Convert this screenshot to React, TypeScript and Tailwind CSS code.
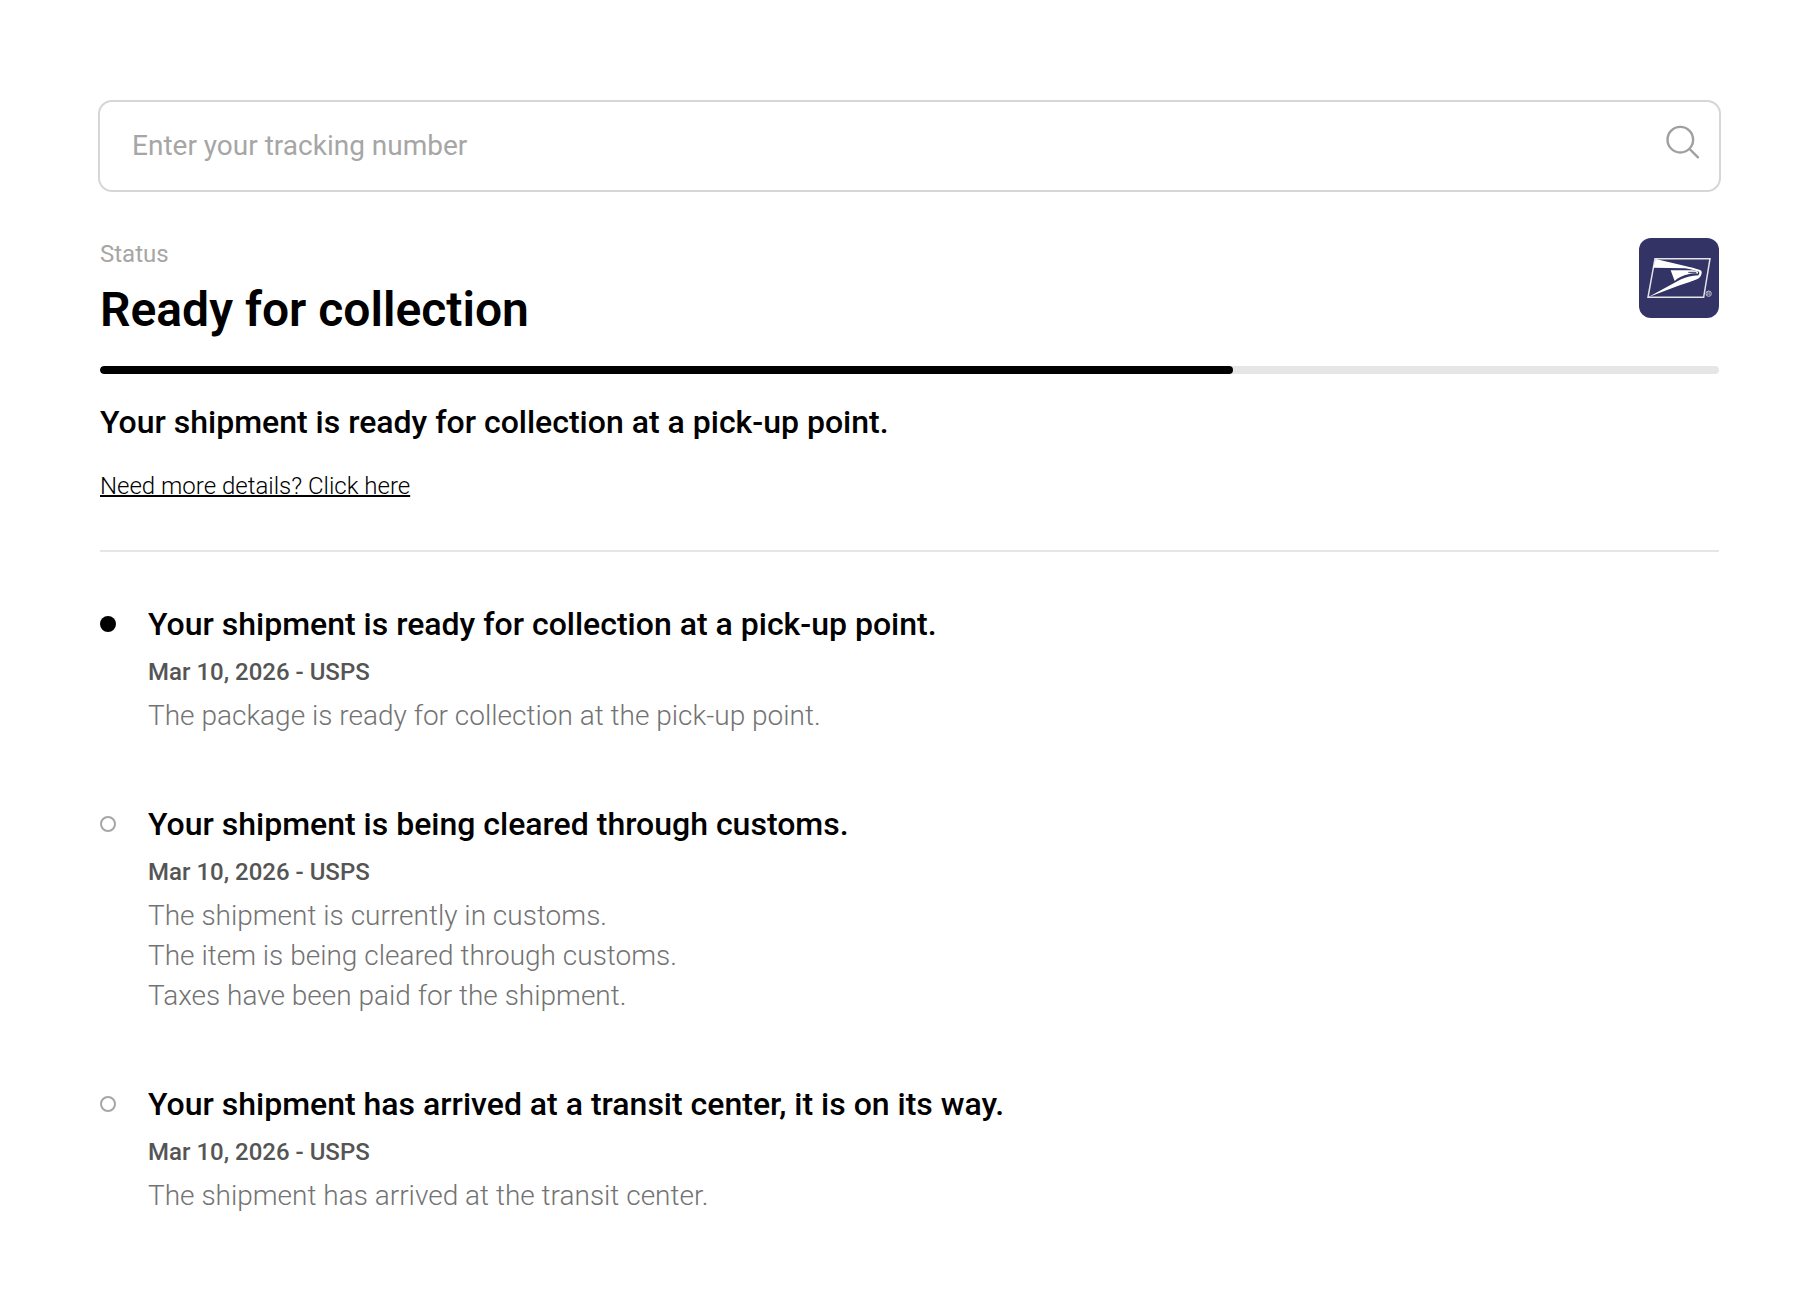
import { useState } from "react";

type TrackingEvent = {
  id: number;
  title: string;
  date: string;
  carrier: string;
  details: string[];
};

const PROGRESS = 70;

const EVENTS: TrackingEvent[] = [
  {
    id: 1,
    title: "Your shipment is ready for collection at a pick-up point.",
    date: "Mar 10, 2026",
    carrier: "USPS",
    details: ["The package is ready for collection at the pick-up point."],
  },
  {
    id: 2,
    title: "Your shipment is being cleared through customs.",
    date: "Mar 10, 2026",
    carrier: "USPS",
    details: [
      "The shipment is currently in customs.",
      "The item is being cleared through customs.",
      "Taxes have been paid for the shipment.",
    ],
  },
  {
    id: 3,
    title: "Your shipment has arrived at a transit center, it is on its way.",
    date: "Mar 10, 2026",
    carrier: "USPS",
    details: ["The shipment has arrived at the transit center."],
  },
];

const SearchIcon = () => (
  <svg
    viewBox="0 0 36 36"
    className="w-9 h-9"
    fill="none"
    stroke="currentColor"
    strokeWidth="2.4"
    strokeLinecap="round"
    aria-hidden="true"
  >
    <circle cx="15.3" cy="14.7" r="12.8" />
    <path d="M24.6 24 L33 32.3" />
  </svg>
);

const CarrierLogo = () => (
  <svg
    viewBox="0 0 240 240"
    className="w-20 h-20 rounded-xl shrink-0"
    role="img"
    aria-label="USPS"
  >
    <rect width="240" height="240" fill="#333366" />
    <path
      d="M48 62 H213 L194 178 H27 Z"
      fill="none"
      stroke="#e4e4e6"
      strokeWidth="4.5"
    />
    {/* Upper wing and head */}
    <path
      d="M50 63 L142 85 C154 88 164 90 173 93 C184 95 190 99 188 106 C187 113 182 121 174 124 L160 128 C172 120 180 113 181 105 C181 100 176 98 169 98 C160 96 150 92 138 91 L43 89 Z"
      fill="#fff"
    />
    {/* Inner wing */}
    <path
      d="M95 97 L150 97 C160 97 170 98 178 101 L176 107 C166 105 156 106 148 109 C132 112 118 119 107 129 Z"
      fill="#fff"
    />
    {/* Lower wing */}
    <path
      d="M27 178 L115 130 C130 121 146 115 164 113 L179 112 C178 120 170 125 162 128 C146 134 130 139 116 144 Z"
      fill="#fff"
    />
    <path d="M148 103 H172" fill="none" stroke="#333366" strokeWidth="3" />
    {/* Registered mark */}
    <circle cx="209" cy="167" r="8" fill="none" stroke="#c4c4d3" strokeWidth="3" />
    <path
      d="M206 172 V162 H210 A3 3 0 0 1 210 168 H206 M210 168 L213 172"
      fill="none"
      stroke="#c4c4d3"
      strokeWidth="2"
    />
  </svg>
);

const TimelineItem = ({ event, active }: { event: TrackingEvent; active: boolean }) => (
  <li className="flex gap-8">
    <div className="flex items-center h-10">
      <span
        className={
          active
            ? "w-4 h-4 rounded-full bg-black"
            : "w-4 h-4 rounded-full border-2 border-[#a6a6a6]"
        }
      />
    </div>
    <div>
      <h3 className="text-[32px] leading-10 font-medium text-black">{event.title}</h3>
      <p className="mt-3 text-2xl leading-8 font-medium text-[#555555]">
        {event.date} - {event.carrier}
      </p>
      <div className="mt-2 text-[28px] leading-10 font-light text-[#737373]">
        {event.details.map((detail) => (
          <p key={detail}>{detail}</p>
        ))}
      </div>
    </div>
  </li>
);

const App = () => {
  const [trackingNumber, setTrackingNumber] = useState("");

  return (
    <main className="min-h-screen bg-white pl-[98px] pr-[97px] py-[100px] font-[Roboto,sans-serif]">
      <form
        onSubmit={(e) => e.preventDefault()}
        className="flex items-center h-[92px] border-2 border-[#d6d6d6] rounded-[14px] pl-8 pr-[18px]"
      >
        <input
          type="text"
          aria-label="Tracking number"
          placeholder="Enter your tracking number"
          value={trackingNumber}
          onChange={(e) => setTrackingNumber(e.target.value)}
          className="flex-1 min-w-0 h-full pb-0.5 text-[28px] text-black placeholder:text-[#a6a6a6] outline-none"
        />
        <button type="submit" aria-label="Search" className="pb-1.5 text-[#a0a0a0]">
          <SearchIcon />
        </button>
      </form>

      <div className="px-0.5">
        <header className="mt-[46px] flex items-start justify-between">
          <div>
            <p className="text-2xl leading-8 text-[#a6a6a6]">Status</p>
            <h1 className="mt-3 text-5xl leading-[56px] font-semibold text-black">
              Ready for collection
            </h1>
          </div>
          <CarrierLogo />
        </header>

        <div
          role="progressbar"
          aria-label="Delivery progress"
          aria-valuenow={PROGRESS}
          className="mt-7 h-2 rounded bg-[#e6e6e6] overflow-hidden"
        >
          <div className="h-full rounded bg-black" style={{ width: `${PROGRESS}%` }} />
        </div>

        <section className="mt-7 pb-12 border-b-2 border-[#e6e6e6]">
          <h2 className="text-[32px] leading-10 font-medium text-black">
            {EVENTS[0].title}
          </h2>
          <a
            href="#details"
            className="mt-7 inline-block text-2xl leading-8 font-light text-black underline decoration-2"
          >
            Need more details? Click here
          </a>
        </section>

        <ol className="mt-[52px] flex flex-col gap-[68px]">
          {EVENTS.map((event, index) => (
            <TimelineItem key={event.id} event={event} active={index === 0} />
          ))}
        </ol>
      </div>
    </main>
  );
};

export default App;
